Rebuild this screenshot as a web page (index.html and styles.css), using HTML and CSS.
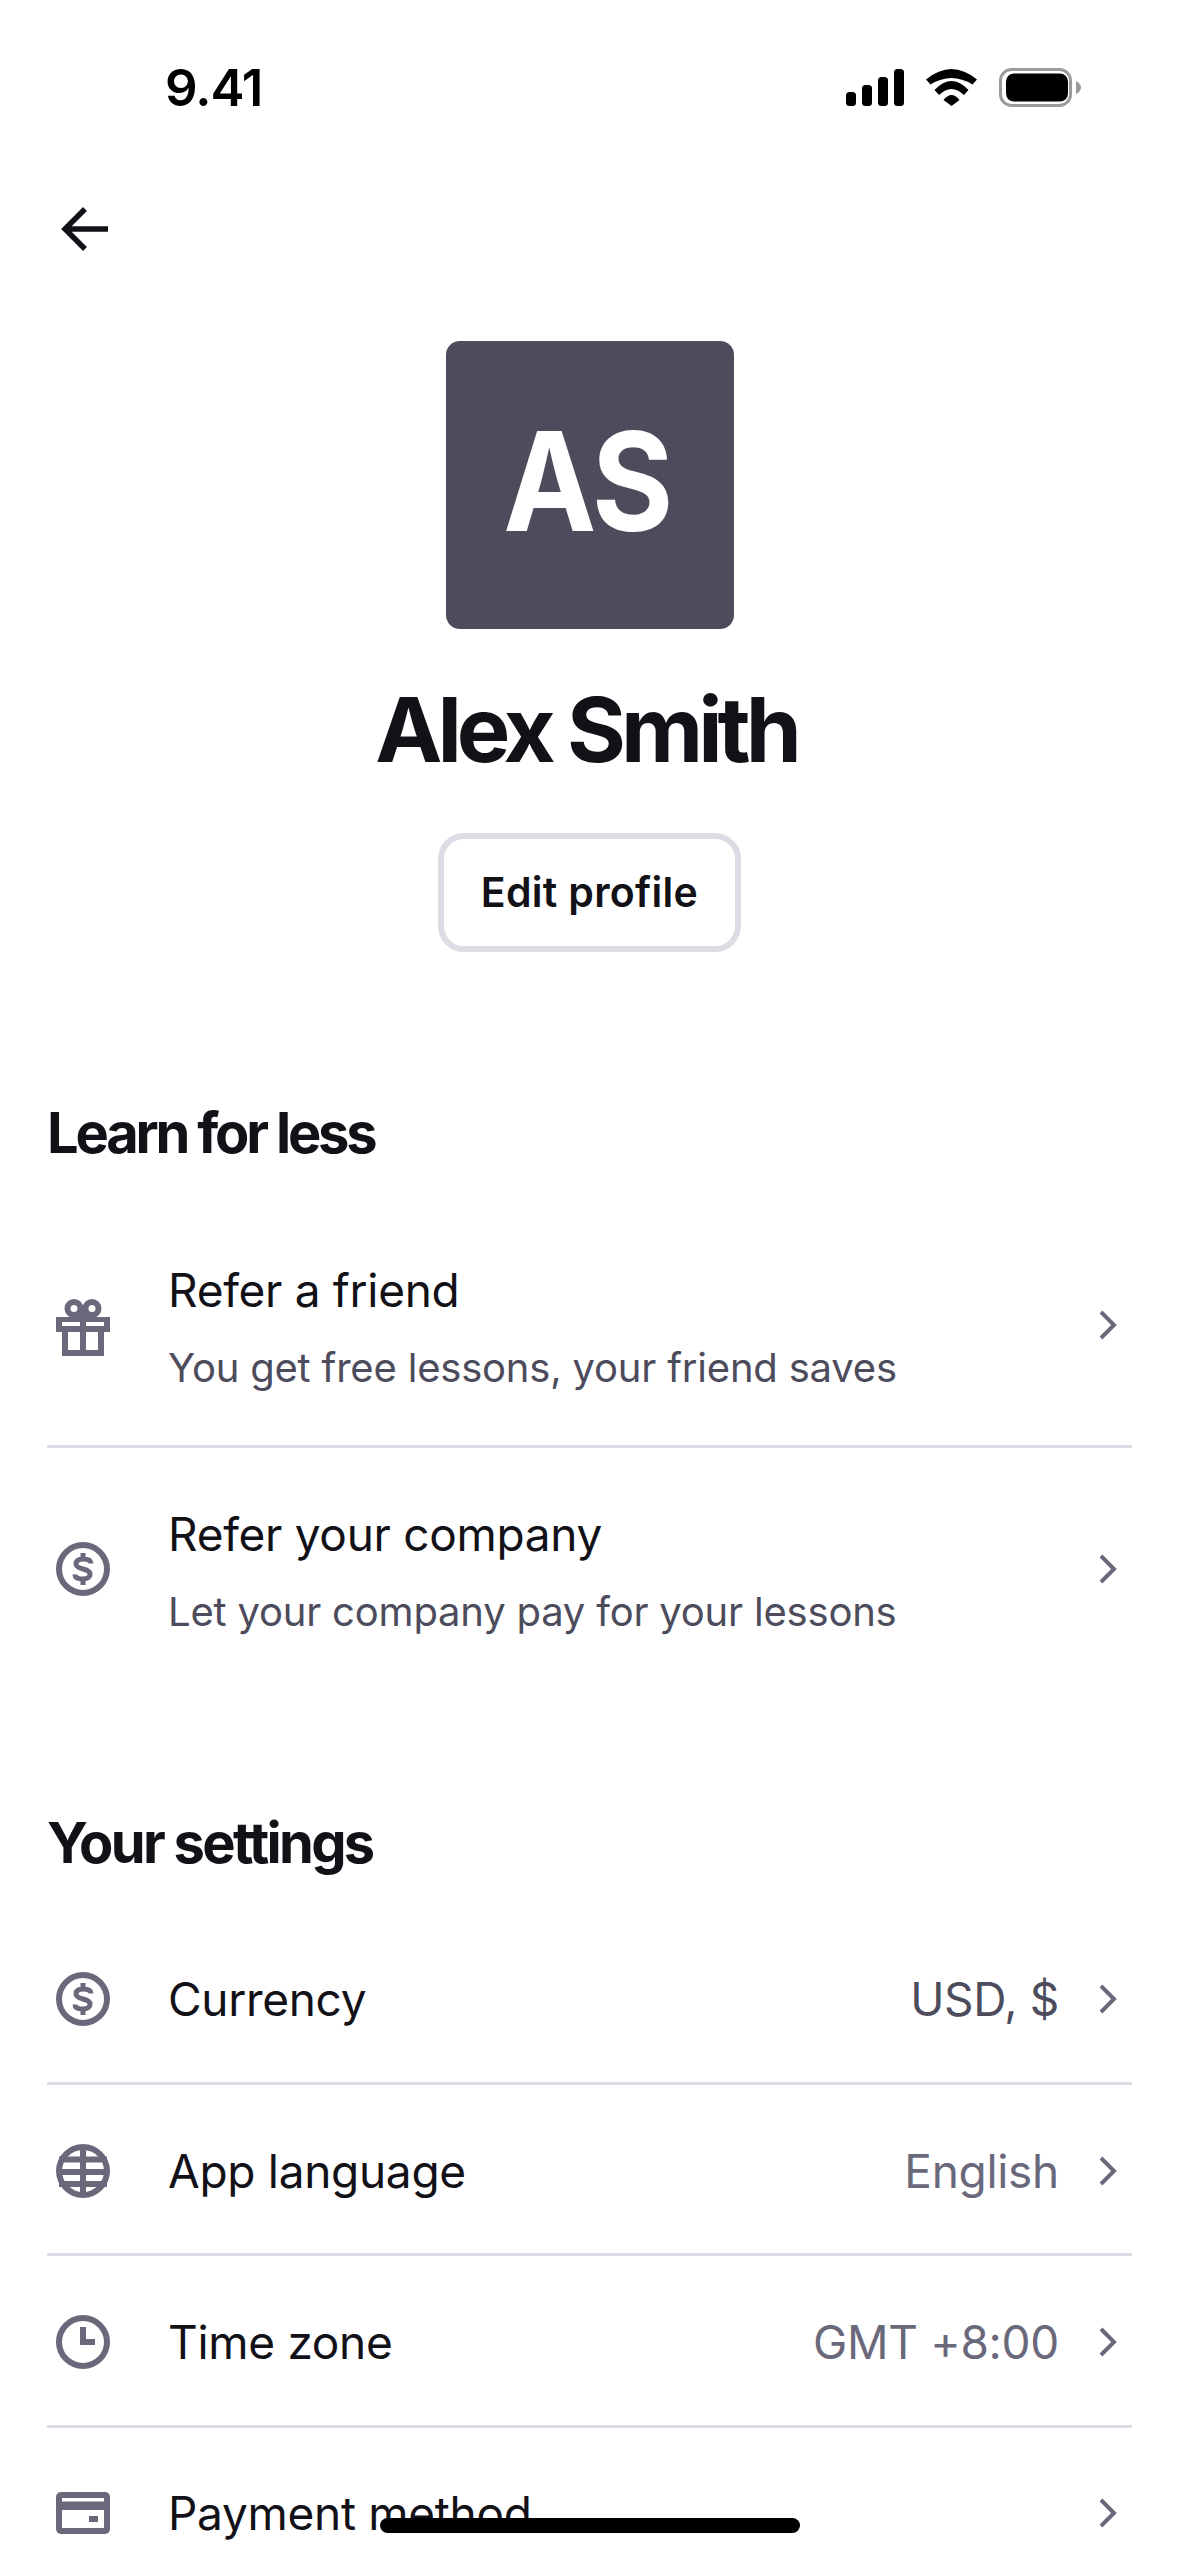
FILE: index.html
```html
<!DOCTYPE html>
<html lang="en">
<head>
<meta charset="utf-8">
<title>Profile</title>
<link rel="stylesheet" href="styles.css">
</head>
<body>
<div class="screen">
  <header class="status">
    <span class="time">9.41</span>
    <div class="status-icons">
      <svg class="sig" viewBox="0 0 58 37"><rect x="0" y="23" width="10" height="14" rx="3.500"/><rect x="16" y="16" width="10" height="21" rx="3.500"/><rect x="32" y="8" width="10" height="29" rx="3.500"/><rect x="48" y="0" width="10" height="37" rx="3.500"/></svg>
      <svg class="wifi" viewBox="0 0 51 37"><path d="M0 10.500Q25.500-10.500 51 10.500L46.500 15.500Q25.500 2.500 4.500 15.500zM8.500 21Q25.500 3 42.500 21L38 26Q25.500 14 13 26zM17.500 31Q25.500 21 33.500 31L25.500 37z"/></svg>
      <svg class="bat" viewBox="0 0 82 39"><rect x="1.500" y="1.500" width="70" height="36" rx="11" fill="none" stroke="#9b9b9e" stroke-width="3"/><rect x="7" y="5.500" width="62" height="28" rx="8"/><path d="M77 13c3 1.500 5 3.500 5 6.500s-2 5-5 6.500z" fill="#9b9b9e"/></svg>
    </div>
  </header>
  <div class="nav">
    <svg class="back" viewBox="0 0 50 46"><path d="M48 23H6M25 3 5 23l20 20" fill="none" stroke="#121117" stroke-width="5.500"/></svg>
  </div>
  <section class="profile">
    <div class="avatar"><span class="initials">AS</span></div>
    <h1 class="name">Alex Smith</h1>
    <button class="edit">Edit profile</button>
  </section>
  <section class="group group-learn">
    <h2 class="group-title">Learn for less</h2>
    <a class="row row-tall">
      <svg class="ico ico-gift" viewBox="0 0 54 57"><g fill="none" stroke="#6a697c" stroke-width="6"><circle cx="18" cy="9.500" r="6.500"/><circle cx="36" cy="9.500" r="6.500"/></g><path fill="#6a697c" d="M21 12h12l3 7H18zM0 18h54v15h-6v24H6V33H0z"/><path fill="#fff" d="M6 23h18v4H6zM30 23h18v4H30zM12 33h12v18H12zM30 33h12v18H30z"/></svg>
      <div class="texts"><div class="t">Refer a friend</div><div class="s">You get free lessons, your friend saves</div></div>
      <svg class="chev" viewBox="0 0 18 30"><path d="M2 2l13 13L2 28" fill="none" stroke="#6a697c" stroke-width="4"/></svg>
    </a>
    <a class="row row-tall">
      <svg class="ico" viewBox="0 0 54 54"><circle cx="27" cy="27" r="24" fill="none" stroke="#6a697c" stroke-width="6"/><path d="M35 21.500C35 18.500 32 17 27 17 22 17 20 19 20 22 20 25 23 26 27 27 31 28 34 29 34 32 34 35 31 37 27 37 22 37 19 36 19 32.500M27 11v6M27 37v6" fill="none" stroke="#6a697c" stroke-width="5"/></svg>
      <div class="texts"><div class="t">Refer your company</div><div class="s">Let your company pay for your lessons</div></div>
      <svg class="chev" viewBox="0 0 18 30"><path d="M2 2l13 13L2 28" fill="none" stroke="#6a697c" stroke-width="4"/></svg>
    </a>
  </section>
  <section class="group group-settings">
    <h2 class="group-title">Your settings</h2>
    <a class="row">
      <svg class="ico" viewBox="0 0 54 54"><circle cx="27" cy="27" r="24" fill="none" stroke="#6a697c" stroke-width="6"/><path d="M35 21.500C35 18.500 32 17 27 17 22 17 20 19 20 22 20 25 23 26 27 27 31 28 34 29 34 32 34 35 31 37 27 37 22 37 19 36 19 32.500M27 11v6M27 37v6" fill="none" stroke="#6a697c" stroke-width="5"/></svg>
      <div class="t grow">Currency</div><span class="v v-dark">USD, $</span>
      <svg class="chev" viewBox="0 0 18 30"><path d="M2 2l13 13L2 28" fill="none" stroke="#6a697c" stroke-width="4"/></svg>
    </a>
    <a class="row">
      <svg class="ico" viewBox="0 0 54 54"><circle cx="27" cy="27" r="27" fill="#6a697c"/><circle cx="27" cy="27" r="21" fill="#fff"/><path fill="#6a697c" d="M24 4h6v46h-6zM3 12.500h48v6H3zM1 25h52v6H1zM3 37h48v6H3z"/></svg>
      <div class="t grow">App language</div><span class="v">English</span>
      <svg class="chev" viewBox="0 0 18 30"><path d="M2 2l13 13L2 28" fill="none" stroke="#6a697c" stroke-width="4"/></svg>
    </a>
    <a class="row">
      <svg class="ico" viewBox="0 0 54 54"><circle cx="27" cy="27" r="24" fill="none" stroke="#6a697c" stroke-width="6"/><path d="M24 12h6v12h9v6H24z" fill="#6a697c"/></svg>
      <div class="t grow">Time zone</div><span class="v">GMT +8:00</span>
      <svg class="chev" viewBox="0 0 18 30"><path d="M2 2l13 13L2 28" fill="none" stroke="#6a697c" stroke-width="4"/></svg>
    </a>
    <a class="row">
      <svg class="ico" viewBox="0 0 54 42"><rect width="54" height="42" rx="5" fill="#6a697c"/><path fill="#fff" d="M6 6h42v3.500H6zM6 18h42v18H6z"/><path fill="#6a697c" d="M33 24h9v6h-9z"/></svg>
      <div class="t grow">Payment method</div>
      <svg class="chev" viewBox="0 0 18 30"><path d="M2 2l13 13L2 28" fill="none" stroke="#6a697c" stroke-width="4"/></svg>
    </a>
  </section>
  <div class="home"></div>
</div>
</body>
</html>
```
FILE: styles.css
```css
* { box-sizing: border-box; margin: 0; padding: 0; }
html, body { background: #fff; }
body { font-family: "Inter", sans-serif; color: #121117; }
.screen { position: relative; width: 1179px; height: 2556px; overflow: hidden; }
.status { height: 176px; display: flex; justify-content: space-between; align-items: flex-start; padding: 60px 98px 0 165px; }
.time { font: 600 51px/56px "Inter", sans-serif; letter-spacing: -1px; color: #000; }
.status-icons { display: flex; align-items: center; gap: 22px; padding-top: 8px; }
.sig { width: 58px; height: 37px; }
.wifi { width: 51px; height: 37px; }
.bat { width: 82px; height: 39px; }
.nav { height: 165px; padding: 30px 0 0 60px; }
.back { width: 50px; height: 46px; display: block; }
.profile { display: flex; flex-direction: column; align-items: center; }
.avatar { width: 288px; height: 288px; border-radius: 14px; background: #4d4c5c; color: #fff; display: flex; align-items: center; justify-content: center; font: 700 137px/1 "Inter", sans-serif; letter-spacing: -3px; }
.initials { display: inline-block; transform: translate(-3px, -4px) scaleX(.91); }
.name { margin: 45px 7px 0 0; font: 700 90px/112px "Inter", sans-serif; letter-spacing: -5px; }
.edit { margin-top: 47px; width: 303px; height: 119px; border: 6px solid #dcdce5; border-radius: 26px; background: #fff; color: #121117; font: 600 41px/1 "Inter", sans-serif; letter-spacing: .3px; }
.group { padding: 0 47px; }
.group-learn { margin-top: 145px; }
.group-settings { margin-top: 116px; }
.group-title { font: 700 56px/72px "Inter", sans-serif; letter-spacing: -3.200px; }
.group-settings .group-title { letter-spacing: -2.700px; margin-bottom: 34.500px; }
.group-learn .group-title { margin-bottom: 35.500px; }
.row { display: flex; align-items: center; height: 171.500px; border-bottom: 3px solid #dcdce5; padding-left: 9px; }
.group-settings .row { padding-top: 4px; }
.row-tall { height: 243px; }
.group-settings .row:last-child { padding-top: 0; }
.row:last-child { border-bottom: 0; }
.ico { width: 54px; flex: none; height: 54px; margin-right: 58px; }
.ico-gift { height: 57px; margin-top: 6px; }
.texts { flex: 1; display: flex; flex-direction: column; gap: 20px; padding-top: 6px; }
.t { font: 400 46px/60px "Inter", sans-serif; letter-spacing: -.3px; }
.s { font: 400 40px/56px "Inter", sans-serif; letter-spacing: -.2px; color: #4d4c5c; }
.grow { flex: 1; }
.v { font: 400 46px/60px "Inter", sans-serif; letter-spacing: -.3px; color: #6a697c; margin-right: 40px; }
.v-dark { color: #4d4c5c; }
.chev { width: 18px; height: 30px; flex: none; margin-right: 15px; }
.home { position: absolute; left: 380px; top: 2518px; width: 420px; height: 15px; border-radius: 8px; background: #000; }
```
